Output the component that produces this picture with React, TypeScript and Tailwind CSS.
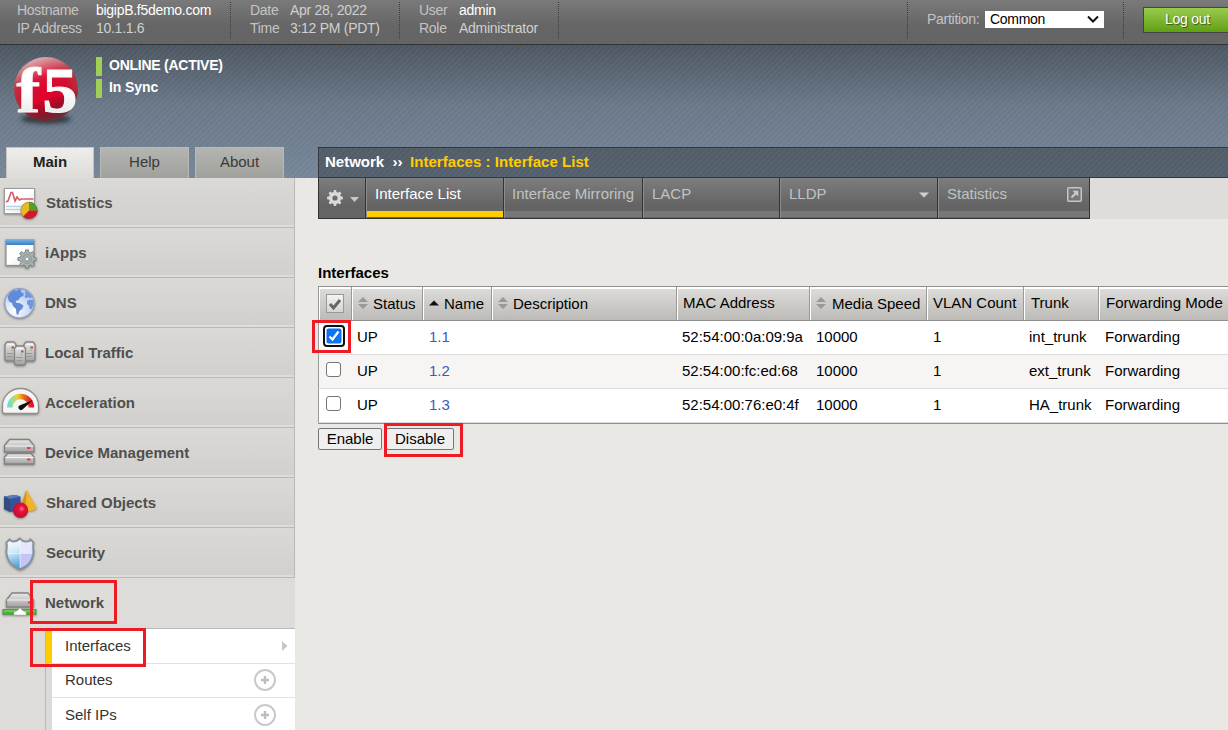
import React from "react";

const Sans = "font-['Liberation_Sans',Arial,sans-serif]";

function Gear({ cx, cy, r, hole, fill, stroke, teeth = 8 }: { cx: number; cy: number; r: number; hole: number; fill: string; stroke?: string; teeth?: number }) {
  const pts: string[] = [];
  const step = (Math.PI * 2) / teeth;
  for (let i = 0; i < teeth; i++) {
    const a = i * step - Math.PI / 2;
    const inner = r * 0.76;
    const spots: [number, number][] = [
      [a - step * 0.3, inner],
      [a - step * 0.19, r],
      [a + step * 0.19, r],
      [a + step * 0.3, inner],
    ];
    spots.forEach(([t, d]) => pts.push(`${(cx + d * Math.cos(t)).toFixed(2)} ${(cy + d * Math.sin(t)).toFixed(2)}`));
  }
  const d = `M${pts.join("L")}Z M${cx - hole} ${cy}a${hole} ${hole} 0 1 0 ${hole * 2} 0a${hole} ${hole} 0 1 0 ${-hole * 2} 0Z`;
  return <path d={d} fill={fill} fillRule="evenodd" stroke={stroke} strokeWidth={stroke ? 1 : 0} strokeLinejoin="round" />;
}

function Logo() {
  return (
    <svg width="80" height="80" viewBox="0 0 80 80" className="block shrink-0">
      <defs>
        <radialGradient id="ball" cx="0.5" cy="0.55" r="0.55">
          <stop offset="0" stopColor="#e4002b" />
          <stop offset="0.65" stopColor="#d40c2e" />
          <stop offset="0.88" stopColor="#bd2a3a" />
          <stop offset="1" stopColor="#a04049" />
        </radialGradient>
        <linearGradient id="gloss" x1="0.1" y1="0" x2="0.45" y2="1">
          <stop offset="0" stopColor="#fff" stopOpacity="0.75" />
          <stop offset="0.4" stopColor="#fff" stopOpacity="0.05" />
          <stop offset="0.7" stopColor="#000" stopOpacity="0" />
          <stop offset="1" stopColor="#333" stopOpacity="0.6" />
        </linearGradient>
        <linearGradient id="letters" x1="0" y1="0" x2="0" y2="1">
          <stop offset="0.5" stopColor="#fff" />
          <stop offset="1" stopColor="#dedede" />
        </linearGradient>
        <filter id="soft" x="-20%" y="-50%" width="140%" height="200%">
          <feGaussianBlur stdDeviation="2" />
        </filter>
      </defs>
      <ellipse cx="40" cy="70" rx="25" ry="5" fill="#20262c" opacity="0.75" filter="url(#soft)" />
      <circle cx="40" cy="40" r="32" fill="url(#ball)" />
      <circle cx="40" cy="40" r="32" fill="url(#gloss)" />
      <g fontFamily="'Liberation Serif', serif" fontWeight="700" fill="url(#letters)" stroke="#f6f6f6" strokeWidth="1.200">
        <text x="0" y="0" fontSize="66" transform="translate(10.500 62.800) scale(1.080 .97)">f</text>
        <text x="0" y="0" fontSize="66" transform="translate(36.500 62.500) scale(1.060 .97)">5</text>
      </g>
    </svg>
  );
}

function IconDefs() {
  return (
    <svg width="0" height="0" className="absolute">
      <defs>
        <linearGradient id="metal" x1="0" y1="0" x2="0" y2="1">
          <stop offset="0" stopColor="#e9e9e9" />
          <stop offset="1" stopColor="#a2a2a2" />
        </linearGradient>
        <linearGradient id="paper" x1="0" y1="0" x2="1" y2="1">
          <stop offset="0" stopColor="#fff" />
          <stop offset="0.5" stopColor="#fff" />
          <stop offset="1" stopColor="#dcdde2" />
        </linearGradient>
        <linearGradient id="blue" x1="0" y1="0" x2="0" y2="1">
          <stop offset="0" stopColor="#76b4e6" />
          <stop offset="1" stopColor="#3b7dc0" />
        </linearGradient>
        <radialGradient id="sea" cx="0.35" cy="0.75" r="0.8">
          <stop offset="0" stopColor="#fff" />
          <stop offset="1" stopColor="#a9c1ec" />
        </radialGradient>
        <linearGradient id="shieldL" x1="0" y1="0" x2="0.3" y2="1">
          <stop offset="0" stopColor="#fff" />
          <stop offset="0.45" stopColor="#d3ebf8" />
          <stop offset="1" stopColor="#3f9bd5" />
        </linearGradient>
        <linearGradient id="dial" x1="0" y1="0" x2="1" y2="0">
          <stop offset="0" stopColor="#6edbd5" />
          <stop offset="0.15" stopColor="#a7dc8a" />
          <stop offset="0.38" stopColor="#f0c92a" />
          <stop offset="0.65" stopColor="#ec6a1c" />
          <stop offset="1" stopColor="#e5122d" />
        </linearGradient>
        <radialGradient id="orb" cx="0.58" cy="0.4" r="0.6">
          <stop offset="0" stopColor="#ff6f8c" />
          <stop offset="0.35" stopColor="#e41038" />
          <stop offset="1" stopColor="#c40e2c" />
        </radialGradient>
      </defs>
    </svg>
  );
}

function Tower({ x, y }: { x: number; y: number }) {
  return (
    <g>
      <path d={`M${x} ${y + 3}l2-2.500h7l2 2.500v15l-1.500 1.500h-8l-1.500-1.500Z`} fill="url(#metal)" stroke="#858585" strokeWidth="1.300" />
      <path d={`M${x + 2} ${y + 3}h7`} stroke="#f5f5f5" />
      <rect x={x + 6.5} y={y + 5} width="2.500" height="2" fill="#e8324a" />
      <rect x={x + 6} y={y + 8} width="2" height="1.500" fill="#8bd07a" />
      <path d={`M${x + 2} ${y + 12}h6M${x + 2} ${y + 15}h6`} stroke="#999" />
    </g>
  );
}

const art: Record<string, React.ReactNode> = {
  Statistics: (
    <>
      <rect x="4.500" y="10.500" width="30" height="25" fill="url(#paper)" stroke="#999b9d" />
      <path d="M6 28.500h18M6 31.500h15" stroke="#b9d2e8" strokeWidth="1.500" />
      <path d="M6 24l2-1 3-8.500 1.500 0L15 23l2-4 2.500 3 2-1 12 0" fill="none" stroke="#d3606a" strokeWidth="1.700" />
      <circle cx="29" cy="32.500" r="8.500" fill="#e8b923" />
      <path d="M29 32.500V24a8.500 8.500 0 0 1 8.500 8.500Z" fill="#47a52a" />
      <path d="M29 32.500h8.500a8.500 8.500 0 0 1-14.500 6Z" fill="#d3172f" />
      <circle cx="29" cy="32.500" r="8.300" fill="none" stroke="#555" strokeOpacity="0.4" />
    </>
  ),
  iApps: (
    <>
      <rect x="6" y="12" width="28" height="25.500" fill="url(#paper)" stroke="#8d8f92" strokeWidth="1.200" />
      <rect x="6" y="11.500" width="28" height="5.500" fill="url(#blue)" />
      <Gear cx={27} cy={31} r={9.2} hole={2.2} fill="#a9b2b3" stroke="#7d8687" teeth={8} />
      <circle cx="27" cy="31" r="4.500" fill="none" stroke="#8d9798" />
    </>
  ),
  DNS: (
    <>
      <circle cx="19.500" cy="25.300" r="14.700" fill="url(#sea)" stroke="#8d9fc2" strokeWidth="1.200" />
      <path d="M7.500 19q1-3 4-5.500l3-1.500 2 1 2-2 3 1-1 2 3 1 0 3-3 1-2 3-3 1 1 2 3 0 4 2.500-1 3-3 2.500-1.500 4-1.500-1-.5-5-3-3-1-3-3-1.500Z" fill="#5f8bd9" />
      <path d="M25 12.500q5 2 7.500 7l-3 .5-1.500-1-2 1.500-1.500-2 1-2Z" fill="#6e96de" />
      <path d="M27 23l3-1.500 3.700 1q.3 5-2.200 9l-2-1-.5-3-2-1.500Z" fill="#6e96de" />
    </>
  ),
  "Local Traffic": (
    <>
      <Tower x={5} y={13.5} />
      <Tower x={24} y={13.5} />
      <Tower x={14.5} y={17.5} />
    </>
  ),
  Acceleration: (
    <>
      <path d="M2.500 34V28a18 17.500 0 0 1 36 0v6l-1.500 1.500h-33Z" fill="#f5f5f4" stroke="#8f9190" strokeWidth="1.300" />
      <path d="M9.800 29.500a10.800 11 0 0 1 21.600 0" fill="none" stroke="url(#dial)" strokeWidth="5.500" />
      <path d="M33 22L22.500 31.500a2.500 2.500 0 1 1-3-4Z" fill="#111" />
    </>
  ),
  "Device Management": (
    <>
      <path d="M4.500 17.500L9.500 11.500h19.500l5 6v6.500h-29.500Z" fill="url(#metal)" stroke="#828282" strokeWidth="1.300" />
      <path d="M5.500 18h28" stroke="#f5f5f5" />
      <rect x="27" y="19" width="3.500" height="2" fill="#ee3950" />
      <path d="M4.500 29L8 25.500h23l3 3.500v7h-29.500Z" fill="url(#metal)" stroke="#828282" strokeWidth="1.300" />
      <path d="M5.500 29.500h28" stroke="#f5f5f5" />
      <rect x="27" y="30.500" width="3.500" height="2" fill="#ee3950" />
    </>
  ),
  "Shared Objects": (
    <>
      <path d="M4 18.500l11-1.500 5.500 1.500v14L11 34l-7-3Z" fill="#34539a" />
      <path d="M4 18.500l6 2.500V34L4 31Z" fill="#344b7c" />
      <path d="M4 18.500l11-1.500 5.500 1.500L10 21Z" fill="#567abb" />
      <path d="M26.500 12L20.500 29q1 5 8 4 6 0 8.500-3Z" fill="#f0b429" />
      <path d="M26.500 12L20.500 29q1 4 5 4Z" fill="#cf9420" />
      <circle cx="20.500" cy="32.300" r="7.700" fill="url(#orb)" />
    </>
  ),
  Security: (
    <>
      <path d="M20 10.500q3 4 7 3 3 0 3.500-2l3 3q-1 4 0 8 0 14-13.500 19Q6.500 36 6.500 23q1-5 0-8.500l3-3q1 2 3.500 2 4 0 7-3Z" fill="url(#shieldL)" stroke="#8b8f9c" strokeWidth="1.800" />
      <path d="M20 25.500h12q-1 11-12 14.500Z" fill="#c5c5f5" />
      <path d="M20 12.500q3 3 7 2.500l4-1.500 1 1.500q-1 4 0 10H20Z" fill="#e6e6fc" />
      <path d="M20 12v28M7.500 25.500h25" stroke="#f6faff" strokeWidth="0.600" />
    </>
  ),
  Network: (
    <>
      <path d="M6.500 22L12 15h16l5.500 7v7h-27Z" fill="url(#metal)" stroke="#858585" strokeWidth="1.300" />
      <path d="M7 22h26" stroke="#f5f5f5" />
      <rect x="28" y="23.500" width="3.500" height="2" fill="#ee3950" />
      <rect x="3" y="31.500" width="33" height="5" fill="#46b432" stroke="#58974c" />
      <path d="M4 33h31" stroke="#88db73" />
      <path d="M14 37v-3l3-1 3-3 3 3 3 1v3Z" fill="#fff" stroke="#aaa" strokeWidth="0.500" />
    </>
  ),
};

function NavIcon({ name }: { name: string }) {
  return (
    <svg width="45" height="47" viewBox="0 0 45 47" className="block shrink-0 drop-shadow-[0_1px_1px_rgba(0,0,0,0.35)]">
      {art[name]}
    </svg>
  );
}

function Field({ rows, className }: { rows: [string, string, boolean?][]; className: string }) {
  return (
    <div className={`flex h-[37px] shrink-0 flex-col border-r border-dotted border-[#3c3c3c] ${className}`}>
      {rows.map(([k, v, strong]) => (
        <div key={k} className="-mt-px mb-px flex h-[18px] leading-[18px]">
          <span className="w-[var(--k)] shrink-0 text-[#c4c4c4]">{k}</span>
          <span className={strong ? "text-white" : "text-[#d0d0d0]"}>{v}</span>
        </div>
      ))}
    </div>
  );
}

function TopBar() {
  return (
    <div className="flex h-[45px] shrink-0 border-b border-[#333] bg-linear-to-b from-[#7a7a7a] to-[#656565] to-60% pt-[2px] text-[14px] tracking-[-0.28px]">
      <Field className="w-[231px] pl-[17px] [--k:79px]" rows={[["Hostname", "bigipB.f5demo.com", true], ["IP Address", "10.1.1.6"]]} />
      <Field className="w-[169px] pl-[19px] [--k:40px]" rows={[["Date", "Apr 28, 2022"], ["Time", "3:12 PM (PDT)"]]} />
      <Field className="w-[159px] pl-[19px] [--k:40px]" rows={[["User", "admin", true], ["Role", "Administrator"]]} />
      <div className="h-[37px] w-[349px] shrink-0 border-r border-dotted border-[#3c3c3c]" />
      <div className="flex h-[37px] w-[216px] shrink-0 border-r border-dotted border-[#3c3c3c] pt-[9px] pl-[19px]">
        <span className="w-[58px] shrink-0 leading-[17px] text-[#c4c4c4]">Partition:</span>
        <div className="flex h-[17px] w-[119px] items-center justify-between bg-white pr-[4px] pl-[5px] leading-[17px] text-black">
          <span>Common</span>
          <svg width="14" height="9" viewBox="0 0 14 9">
            <path d="M2 1.500l5 5 5-5" fill="none" stroke="#111" strokeWidth="2" />
          </svg>
        </div>
      </div>
      <div className="mt-[5px] ml-[19px] h-[26px] w-[85px] shrink-0 border border-r-0 border-[#444] bg-linear-to-b from-[#9acb4b] to-[#60a010] pl-[21px] leading-[23px] text-white [text-shadow:1px_1px_1px_rgba(0,0,0,0.5)]">
        Log out
      </div>
    </div>
  );
}

function Header() {
  return (
    <div className="flex h-[133px] shrink-0 flex-col justify-between bg-[repeating-linear-gradient(135deg,rgba(255,255,255,0)_0_2px,rgba(255,255,255,0.035)_2px_4px),linear-gradient(to_bottom,#4c5661,#697787_45%,#758698)]">
      <div className="flex h-[92px] pt-[4px] pl-[6px]">
        <Logo />
        <div className="flex flex-col gap-[3px] pt-[8px] pl-[10px] text-[14px] font-bold text-white">
          <div className="flex h-[19px] border-l-[6px] border-[#9fcf54] pl-[7px] leading-[17px] tracking-[-0.25px]">ONLINE (ACTIVE)</div>
          <div className="flex h-[19px] border-l-[6px] border-[#9fcf54] pl-[7px] leading-[17px] tracking-[-0.1px]">In Sync</div>
        </div>
      </div>
      <div className="flex h-[31px] text-[15px]">
        <div className="flex w-[318px] shrink-0 gap-[6px] pl-[6px] text-center leading-[28px] text-[#3a3a3a]">
          <div className="w-[88px] border border-b-0 border-[#c4c4c4] bg-linear-to-b from-[#eeedeb] to-[#dddcd8] font-bold text-[#222]">Main</div>
          <div className="w-[89px] border border-b-0 border-[#b9bab6] bg-linear-to-b from-[#b4b4b0] to-[#a0a09c]">Help</div>
          <div className="w-[89px] border border-b-0 border-[#b9bab6] bg-linear-to-b from-[#b4b4b0] to-[#a0a09c]">About</div>
        </div>
        <div className="flex flex-1 border border-r-0 border-[#32383e] bg-[repeating-linear-gradient(135deg,rgba(255,255,255,0)_0_2px,rgba(255,255,255,0.03)_2px_4px),linear-gradient(to_bottom,#525c66,#535f6d)] pl-[6px] leading-[28px] font-bold">
          <span className="w-[85px] whitespace-pre text-white">Network&nbsp; ››</span>
          <span className="tracking-[0.05px] text-[#fc0]">Interfaces : Interface List</span>
        </div>
      </div>
    </div>
  );
}

const nav = ["Statistics", "iApps", "DNS", "Local Traffic", "Acceleration", "Device Management", "Shared Objects", "Security"];

function Plus() {
  return (
    <svg width="24" height="24" viewBox="0 0 24 24" className="-mt-px mb-px">
      <circle cx="12" cy="12" r="10" fill="#fff" stroke="#c9c9c9" strokeWidth="2" />
      <path d="M12 8v8M8 12h8" stroke="#bdbdbd" strokeWidth="2.400" />
    </svg>
  );
}

function Sidebar() {
  return (
    <div className="flex w-[295px] shrink-0 flex-col bg-[#dddcd8] text-[15px]">
      {nav.map((n) => (
        <div key={n} className="flex h-[50px] shrink-0 border-r border-b border-[#b9b8b4]">
          <div className="flex h-[49px] w-full border-b-2 border-[#dedddb] bg-linear-to-b from-[#dad9d5] to-[#d1d0cc]">
            <NavIcon name={n} />
            <span className={`leading-[49px] font-bold text-[#4f4f4f] ${n[0] === "S" ? "pl-px" : ""}`}>{n}</span>
          </div>
        </div>
      ))}
      <div className="flex h-[50px] shrink-0">
        <NavIcon name="Network" />
        <span className="leading-[49px] font-bold text-[#4f4f4f]">Network</span>
      </div>
      <div className="ml-[45px] flex flex-1 flex-col border-t border-l border-[#b9b9b9] bg-[#dadad8] text-[#333]">
        <div className="flex h-[35px] shrink-0 items-center justify-between border-b border-l-[6px] border-b-[#e2e2e2] border-l-[#fc0] bg-white pr-[7px] pl-[13px]">
          <span>Interfaces</span>
          <svg width="6" height="10" viewBox="0 0 6 10">
            <path d="M0 0l5.500 5-5.500 5Z" fill="#c6c6c6" />
          </svg>
        </div>
        <div className="ml-[6px] flex h-[34px] shrink-0 items-center justify-between border-b border-[#e2e2e2] bg-white pr-[18px] pl-[13px]">
          <span>Routes</span>
          <Plus />
        </div>
        <div className="ml-[6px] flex h-[35px] shrink-0 items-center justify-between bg-white pr-[18px] pl-[13px]">
          <span>Self IPs</span>
          <Plus />
        </div>
      </div>
    </div>
  );
}

function Tab({ label, className, active, children }: { label: string; className: string; active?: boolean; children?: React.ReactNode }) {
  return (
    <div className={`flex h-[40px] shrink-0 flex-col border-r border-l border-r-[#333] border-l-[#8c8c8c] ${className}`}>
      <div className="flex h-[33px] items-center justify-between pr-[8px] pl-[8px] whitespace-nowrap">
        <span className={active ? "text-white" : "text-[#c2c2c2]"}>{label}</span>
        {children}
      </div>
      <div className={active ? "h-[6px] bg-[#fc0]" : "h-[6px] bg-[#777]"} />
    </div>
  );
}

function TabBar() {
  return (
    <div className="flex h-[41px] shrink-0 bg-[#deddd9] text-[15px]">
      <div className="flex h-[41px] border-b border-l border-[#333] bg-linear-to-b from-[#7d7d7d] to-[#646464] to-70%">
        <div className="flex w-[47px] shrink-0 items-center border-r border-[#333] pl-[7px]">
          <svg width="34" height="18" viewBox="0 0 34 18">
            <Gear cx={9} cy={9} r={8} hole={2.6} fill="#dadada" />
            <path d="M24 8h9l-4.500 5Z" fill="#c9c9c9" />
          </svg>
        </div>
        <Tab label="Interface List" active className="w-[138px]" />
        <Tab label="Interface Mirroring" className="w-[139px] tracking-[0.02px] [&>div:first-child]:pl-[7px]" />
        <Tab label="LACP" className="w-[137px]" />
        <Tab label="LLDP" className="w-[158px]">
          <svg width="10" height="6" viewBox="0 0 10 6">
            <path d="M0 .500h10L5 5.500Z" fill="#cfcfcf" />
          </svg>
        </Tab>
        <Tab label="Statistics" className="w-[152px]">
          <svg width="15" height="15" viewBox="0 0 15 15" className="-mr-px">
            <rect x="0.750" y="0.750" width="13.500" height="13.500" rx="1" fill="#777" stroke="#c6c6c6" strokeWidth="1.500" />
            <path d="M4.500 10.500L8.500 6.500" stroke="#ccc" strokeWidth="2" />
            <path d="M5.500 3.800h5.700v5.700Z" fill="#ccc" />
          </svg>
        </Tab>
      </div>
    </div>
  );
}

function SortMark({ up }: { up?: boolean }) {
  return up ? (
    <svg width="10" height="6" viewBox="0 0 10 6" className="mb-[3px]">
      <path d="M0 5.500h10L5 .500Z" fill="#111" />
    </svg>
  ) : (
    <svg width="10" height="12" viewBox="0 0 10 12" className="mb-[3px]">
      <path d="M0 5h10L5 0ZM0 7h10L5 12Z" fill="#999" />
    </svg>
  );
}

const cols = "grid grid-cols-[33px_71px_69px_185px_133px_117px_97px_75px_130px]";
const headers: { label: string; sort?: "both" | "up"; pad: string }[] = [
  { label: "Status", sort: "both", pad: "gap-[5px] pl-[4px]" },
  { label: "Name", sort: "up", pad: "gap-[5px] pl-[4px]" },
  { label: "Description", sort: "both", pad: "gap-[5px] pl-[4px]" },
  { label: "MAC Address", pad: "pb-[2px] pl-[4px]" },
  { label: "Media Speed", sort: "both", pad: "gap-[6px] pl-[4px]" },
  { label: "VLAN Count", pad: "pb-[2px] pl-[4px]" },
  { label: "Trunk", pad: "pb-[2px] pl-[5px]" },
  { label: "Forwarding Mode", pad: "pb-[2px] pl-[5px]" },
];
const rows = [
  ["UP", "1.1", "", "52:54:00:0a:09:9a", "10000", "1", "int_trunk", "Forwarding"],
  ["UP", "1.2", "", "52:54:00:fc:ed:68", "10000", "1", "ext_trunk", "Forwarding"],
  ["UP", "1.3", "", "52:54:00:76:e0:4f", "10000", "1", "HA_trunk", "Forwarding"],
];
const cellClass = ["pl-[5px]", "pl-[6px] text-[#3a5cc0]", "pl-[5px]", "pl-[5px]", "pl-[6px]", "pl-[6px]", "pl-[5px]", "pl-[6px]"];

function Th({ children, className = "" }: { children: React.ReactNode; className?: string }) {
  return (
    <div className="flex border-l border-[#999]">
      <div className={`flex flex-1 items-center border-t-2 border-l border-white bg-linear-to-b from-[#dcdbd9] to-[#bcbbb7] whitespace-nowrap ${className}`}>{children}</div>
    </div>
  );
}

function Check({ on }: { on: boolean }) {
  return on ? (
    <div className="mb-[3px] ml-[4px] flex size-[22px] items-center justify-center rounded-[4px] border-2 border-[#101010] bg-white">
      <svg width="16" height="16" viewBox="0 0 16 16">
        <rect x="0.500" y="0.500" width="15" height="15" rx="2" fill="#0a74f5" />
        <path d="M3.500 8.500l3 3 6-8" fill="none" stroke="#fff" strokeWidth="2.200" />
      </svg>
    </div>
  ) : (
    <div className="mb-[4px] ml-[7px] size-[15px] rounded-[3px] border border-[#767676] bg-white" />
  );
}

function Table() {
  return (
    <div className="flex w-[910px] flex-col text-[15px] text-black">
      <div className={`${cols} h-[35px] border-y border-[#8f8f8f]`}>
        <Th className="pl-px">
          <div className="mb-[2px] ml-[5px] flex h-[19px] w-[18px] items-center justify-center border border-[#999] bg-linear-to-b from-[#f4f4f3] to-[#d5d5d3]">
            <svg width="14" height="14" viewBox="0 0 14 14">
              <path d="M2 7l3.500 4L12 3" fill="none" stroke="#666" strokeWidth="3" />
            </svg>
          </div>
        </Th>
        {headers.map((h) => (
          <Th key={h.label}>
            <div className={`ml-px flex items-center ${h.pad}`}>
              {h.sort && <SortMark up={h.sort === "up"} />}
              <span>{h.label}</span>
            </div>
          </Th>
        ))}
      </div>
      {rows.map((r, i) => (
        <div key={r[1]} className={`${cols} h-[34px] items-center border-b border-l border-b-[#dcdcdc] border-l-[#999] ${i === 1 ? "bg-[#f6f5f3]" : "bg-white"}`}>
          <Check on={i === 0} />
          {r.map((c, j) => (
            <span key={j} className={cellClass[j]}>{c}</span>
          ))}
        </div>
      ))}
      <div className="h-px bg-[#8f8f8f]" />
    </div>
  );
}

export default function App() {
  return (
    <div className={`relative flex h-[730px] w-[1228px] flex-col overflow-hidden bg-[#e9e8e4] ${Sans}`}>
      <IconDefs />
      <TopBar />
      <Header />
      <div className="flex h-[552px]">
        <Sidebar />
        <div className="ml-[23px] flex min-w-0 flex-1 flex-col">
          <TabBar />
          <h1 className="mt-[43px] h-[24px] text-[15px] leading-[22px] font-bold text-black">Interfaces</h1>
          <Table />
          <div className="mt-[4px] flex gap-[4px] text-[15px] leading-[20px] text-black">
            <button className="h-[22px] w-[64px] rounded-[2px] border border-[#767676] bg-[#efefef]">Enable</button>
            <button className="h-[22px] w-[68px] rounded-[2px] border border-[#767676] bg-[#efefef]">Disable</button>
          </div>
        </div>
      </div>
      <div className="absolute top-[320px] left-[312px] h-[33px] w-[39px] border-[3px] border-[#ed1c24]" />
      <div className="absolute top-[423px] left-[384px] h-[34px] w-[79px] border-[3px] border-[#ed1c24]" />
      <div className="absolute top-[580px] left-[30px] h-[44px] w-[87px] border-[3px] border-[#ed1c24]" />
      <div className="absolute top-[628px] left-[30px] h-[39px] w-[116px] border-[3px] border-[#ed1c24]" />
    </div>
  );
}
